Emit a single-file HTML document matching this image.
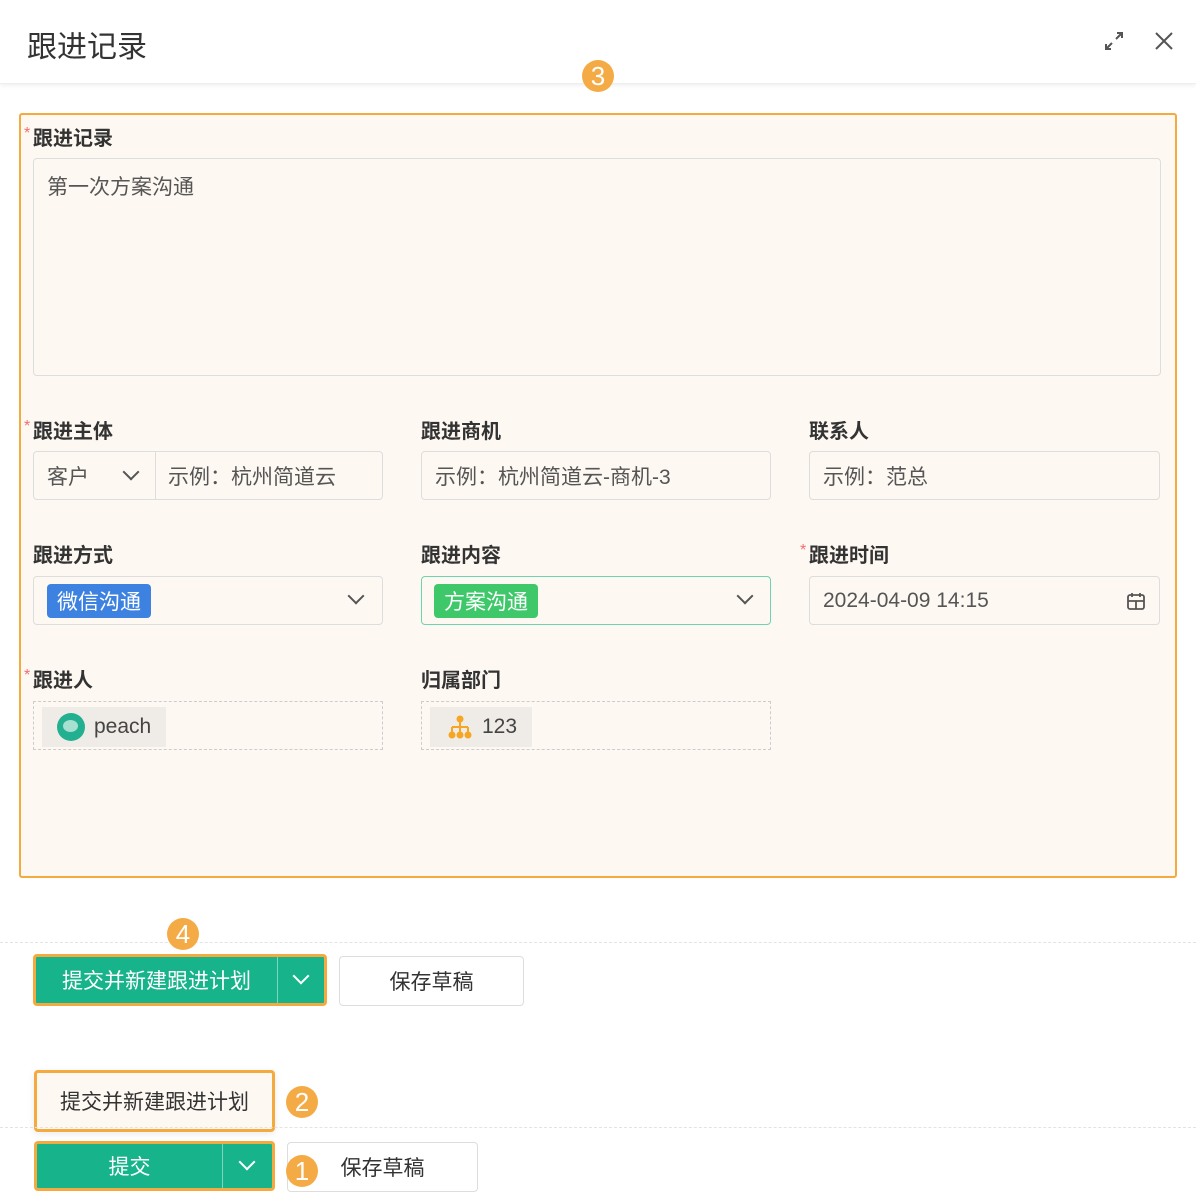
<!DOCTYPE html>
<html><head><meta charset="utf-8"><style>
*{box-sizing:border-box;margin:0;padding:0}
body{width:1196px;height:1200px;background:#fff;position:relative;overflow:hidden;font-family:"Liberation Sans","Noto Sans CJK SC",sans-serif;color:#333}
.a{position:absolute}
.hdr{left:0;top:0;width:1196px;height:84px;background:#fff;box-shadow:0 2px 4px rgba(0,0,0,.06);border-bottom:1px solid #eee}
.title{left:27px;top:22px;font-size:30px;color:#333}
.box{left:19px;top:113px;width:1158px;height:765px;background:#fef8f2;border:2px solid #f5aa40;border-radius:3px}
.lbl{font-size:20px;font-weight:bold;color:#333}
.star{color:#f56c6c;font-weight:normal;font-size:16px;position:absolute;left:-9px;top:3px}
.inp{border:1px solid #ddd;border-radius:4px;background:#fef8f2;font-size:21px;color:#555;padding-left:13px;display:flex;align-items:center}
.dash{border:1px dashed #ccc;background:#fef8f2}
.badge{width:32px;height:32px;border-radius:50%;background:#f5ab45;color:#fff;font-size:26px;display:flex;align-items:center;justify-content:center;line-height:1}
.btn{background:#17b48c;border:3px solid #f5aa40;border-radius:4px;color:#fff;font-size:21px;display:flex;align-items:center}
.wbtn{border:1px solid #ddd;border-radius:4px;background:#fff;font-size:21px;color:#333;display:flex;align-items:center;justify-content:center}
.chev{width:12px;height:12px;border-right:2px solid #555;border-bottom:2px solid #555;transform:rotate(45deg);position:absolute}
.div{border-right:1px solid rgba(255,255,255,.45)}
</style></head><body>
<div class="a hdr"></div>
<div class="a title">跟进记录</div>
<svg class="a" style="left:1103px;top:30px" width="22" height="22" viewBox="0 0 22 22" fill="none" stroke="#555" stroke-width="2"><path d="M13 9L19 3M14 3h5v5M9 13L3 19M3 14v5h5"/></svg>
<svg class="a" style="left:1153px;top:30px" width="22" height="22" viewBox="0 0 22 22" stroke="#555" stroke-width="2"><path d="M3 3L19 19M19 3L3 19"/></svg>
<div class="a badge" style="left:582px;top:60px">3</div>

<div class="a box"></div>
<div class="a lbl" style="left:33px;top:122px"><span class="star">*</span>跟进记录</div>
<div class="a inp" style="left:33px;top:158px;width:1128px;height:218px;align-items:flex-start;padding-top:12px">第一次方案沟通</div>

<div class="a lbl" style="left:33px;top:415px"><span class="star">*</span>跟进主体</div>
<div class="a inp" style="left:33px;top:451px;width:350px;height:49px;padding:0">
<div style="width:122px;height:100%;border-right:1px solid #ddd;padding-left:13px;display:flex;align-items:center;position:relative">客户<span class="chev" style="left:91px;top:14px"></span></div>
<div style="padding-left:12px">示例：杭州简道云</div></div>
<div class="a lbl" style="left:421px;top:415px">跟进商机</div>
<div class="a inp" style="left:421px;top:451px;width:350px;height:49px">示例：杭州简道云-商机-3</div>
<div class="a lbl" style="left:809px;top:415px">联系人</div>
<div class="a inp" style="left:809px;top:451px;width:351px;height:49px">示例：范总</div>

<div class="a lbl" style="left:33px;top:539px">跟进方式</div>
<div class="a inp" style="left:33px;top:576px;width:350px;height:49px;padding-left:13px">
<span style="background:#3d82e0;color:#fff;border-radius:4px;padding:2px 10px;font-size:21px">微信沟通</span><span class="chev" style="left:316px;top:13px"></span></div>
<div class="a lbl" style="left:421px;top:539px">跟进内容</div>
<div class="a inp" style="left:421px;top:576px;width:350px;height:49px;border-color:#6dd3b0;padding-left:12px">
<span style="background:#3ec86a;color:#fff;border-radius:4px;padding:2px 10px;font-size:21px">方案沟通</span><span class="chev" style="left:317px;top:13px"></span></div>
<div class="a lbl" style="left:809px;top:539px"><span class="star">*</span>跟进时间</div>
<div class="a inp" style="left:809px;top:576px;width:351px;height:49px">2024-04-09 14:15
<svg class="a" style="left:316px;top:14px" width="20" height="20" viewBox="0 0 20 20" fill="none" stroke="#555" stroke-width="1.8"><rect x="2" y="4" width="16" height="14" rx="2"/><path d="M6 2v4M14 2v4M2 10h16M10 10v8"/></svg></div>

<div class="a lbl" style="left:33px;top:664px"><span class="star">*</span>跟进人</div>
<div class="a dash" style="left:33px;top:701px;width:350px;height:49px"></div>
<div class="a" style="left:42px;top:707px;width:124px;height:40px;background:#efebe7;display:flex;align-items:center;padding-left:15px;font-size:21px;color:#444">
<span style="width:28px;height:28px;border-radius:50%;background:#22b090;display:inline-block;margin-right:9px;position:relative"><span style="position:absolute;left:6px;top:7px;width:15px;height:12px;border-radius:50%;background:#a6e0d0"></span></span>peach</div>
<div class="a lbl" style="left:421px;top:664px">归属部门</div>
<div class="a dash" style="left:421px;top:701px;width:350px;height:49px"></div>
<div class="a" style="left:430px;top:707px;width:102px;height:40px;background:#efebe7;display:flex;align-items:center;padding-left:17px;font-size:21px;color:#444">
<svg width="26" height="24" viewBox="0 0 26 24" style="margin-right:9px" fill="#f5a623" stroke="#f5a623" stroke-width="2"><circle cx="13" cy="4" r="2.5"/><path d="M13 6v6M5 12h16M5 12v6M13 12v6M21 12v6" fill="none"/><circle cx="5" cy="20" r="2.5"/><circle cx="13" cy="20" r="2.5"/><circle cx="21" cy="20" r="2.5"/></svg>123</div>

<div class="a" style="left:0;top:942px;width:1196px;border-top:1px dashed #e3e3e3"></div>
<div class="a badge" style="left:167px;top:918px">4</div>
<div class="a btn" style="left:33px;top:954px;width:294px;height:52px">
<div class="div" style="width:242px;text-align:center;height:100%;display:flex;align-items:center;justify-content:center">提交并新建跟进计划</div>
<div style="flex:1;position:relative;height:100%"><span class="chev" style="border-color:#fff;left:17px;top:13px"></span></div></div>
<div class="a wbtn" style="left:339px;top:956px;width:185px;height:50px">保存草稿</div>

<div class="a" style="left:34px;top:1070px;width:241px;height:62px;background:#fef8f2;border:3px solid #f5aa40;border-radius:4px;font-size:21px;display:flex;align-items:center;justify-content:center;color:#333;box-shadow:0 2px 8px rgba(0,0,0,.08)">提交并新建跟进计划</div>
<div class="a badge" style="left:286px;top:1086px">2</div>
<div class="a" style="left:0;top:1127px;width:1196px;border-top:1px dashed #e3e3e3"></div>
<div class="a btn" style="left:34px;top:1141px;width:241px;height:50px">
<div class="div" style="width:186px;height:100%;display:flex;align-items:center;justify-content:center">提交</div>
<div style="flex:1;position:relative;height:100%"><span class="chev" style="border-color:#fff;left:18px;top:12px"></span></div></div>
<div class="a wbtn" style="left:287px;top:1142px;width:191px;height:50px;padding-left:0">保存草稿</div>
<div class="a badge" style="left:286px;top:1155px">1</div>
</body></html>
